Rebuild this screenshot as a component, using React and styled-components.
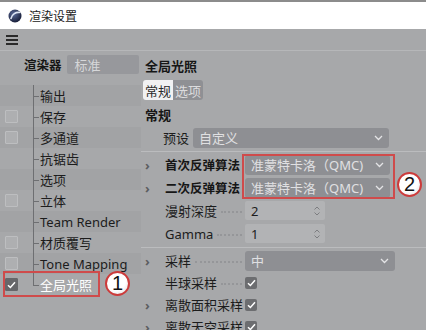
import React from "react";
import styled, { createGlobalStyle } from "styled-components";

const GlobalStyle = createGlobalStyle`
  html, body {
    margin: 0;
    padding: 0;
    background: #ffffff;
    font-family: "Noto Sans", "Noto Sans CJK SC", sans-serif;
  }
`;

// tree items on the left
const treeItems = [
  { label: "输出", box: false },
  { label: "保存", box: true },
  { label: "多通道", box: true },
  { label: "抗锯齿", box: false },
  { label: "选项", box: false },
  { label: "立体", box: true },
  { label: "Team Render", box: false },
  { label: "材质覆写", box: true },
  { label: "Tone Mapping", box: true },
  { label: "全局光照", box: true, checked: true, selected: true },
];

const Logo = () => (
  <svg width="14" height="14" viewBox="0 0 14 14">
    <defs>
      <radialGradient id="lg" cx="0.4" cy="0.35" r="0.7">
        <stop offset="0" stopColor="#5a6a9a" />
        <stop offset="1" stopColor="#141a33" />
      </radialGradient>
    </defs>
    <circle cx="7" cy="7" r="6.5" fill="url(#lg)" />
    <path d="M3 9.5 C4 5 8 3 11.5 3.5" stroke="#dfe6f5" strokeWidth="1.6" fill="none" strokeLinecap="round" />
  </svg>
);

const Chevron = () => (
  <svg width="9" height="6" viewBox="0 0 9 6">
    <polyline points="1,1 4.5,4.5 8,1" fill="none" stroke="#e4e4e6" strokeWidth="1.3" />
  </svg>
);

const Spinner = () => (
  <svg width="8" height="12" viewBox="0 0 8 12">
    <polyline points="1.5,4.5 4,2 6.5,4.5" fill="none" stroke="#7c7d80" strokeWidth="1" />
    <polyline points="1.5,7.5 4,10 6.5,7.5" fill="none" stroke="#7c7d80" strokeWidth="1" />
  </svg>
);

const Tick = () => (
  <svg width="9" height="8" viewBox="0 0 9 8">
    <polyline points="1,4.2 3.4,6.5 8,1.2" fill="none" stroke="#ffffff" strokeWidth="1.5" />
  </svg>
);

const App = () => {
  return (
    <>
      <GlobalStyle />
      <Window>
        <TitleBar>
          <Logo />
          <TitleText>渲染设置</TitleText>
        </TitleBar>
        <MenuBar>
          <Hamburger>
            <span />
            <span />
            <span />
          </Hamburger>
        </MenuBar>
        <Body>
          <Sidebar>
            <RendererRow>
              <Bold>渲染器</Bold>
              <SideSelect>标准</SideSelect>
            </RendererRow>
            <Tree>
              {treeItems.map((item, i) => (
                <TreeRow key={item.label} $striped={i % 2 === 0 && !item.selected}>
                  <BoxCell>
                    {item.box && (
                      <TreeCheck $checked={item.checked}>{item.checked && <Tick />}</TreeCheck>
                    )}
                  </BoxCell>
                  <TreeLabel $last={i === treeItems.length - 1} $selected={item.selected}>
                    {item.label}
                  </TreeLabel>
                  {item.selected && (
                    <>
                      <RedBox $left={3} $top={-3} $width={97} $height={26} />
                      <Badge $left={105} $top={-3}>1</Badge>
                    </>
                  )}
                </TreeRow>
              ))}
            </Tree>
          </Sidebar>

          <Main>
            <Heading>全局光照</Heading>
            <Tabs>
              <Tab $active>常规</Tab>
              <Tab>选项</Tab>
            </Tabs>
            <Heading $gap={5}>常规</Heading>
            <PresetRow>
              <PresetLabel>预设</PresetLabel>
              <Select $width={196}>
                自定义
                <Chevron />
              </Select>
            </PresetRow>

            <Separator />

            <Group $gap={2}>
              <Row>
                <Arrow>›</Arrow>
                <Label>
                  <Bold>首次反弹算法</Bold>
                </Label>
                <Select $width={145}>
                  准蒙特卡洛（QMC)
                  <Chevron />
                </Select>
              </Row>
              <Row>
                <Arrow>›</Arrow>
                <Label>
                  <Bold>二次反弹算法</Bold>
                </Label>
                <Select $width={145}>
                  准蒙特卡洛（QMC)
                  <Chevron />
                </Select>
              </Row>
              <RedBox $left={101} $top={0} $width={153} $height={45} />
              <Badge $left={256} $top={18}>2</Badge>
            </Group>

            <Group $gap={2} $top={2}>
              <Row>
                <Arrow />
                <Label>
                  漫射深度<Dots />
                </Label>
                <NumberField>
                  2
                  <Spinner />
                </NumberField>
              </Row>
              <Row>
                <Arrow />
                <Label>
                  Gamma<Dots />
                </Label>
                <NumberField>
                  1
                  <Spinner />
                </NumberField>
              </Row>
            </Group>

            <Separator />

            <Group $gap={1}>
              <Row>
                <Arrow>›</Arrow>
                <Label>
                  采样<Dots />
                </Label>
                <Select $width={150}>
                  中
                  <Chevron />
                </Select>
              </Row>
              <Row>
                <Arrow />
                <Label>
                  半球采样<Dots />
                </Label>
                <CheckBox>
                  <Tick />
                </CheckBox>
              </Row>
              <Row>
                <Arrow>›</Arrow>
                <Label>离散面积采样</Label>
                <CheckBox>
                  <Tick />
                </CheckBox>
              </Row>
              <Row>
                <Arrow>›</Arrow>
                <Label>离散天空采样</Label>
                <CheckBox>
                  <Tick />
                </CheckBox>
              </Row>
            </Group>
          </Main>
        </Body>
      </Window>
    </>
  );
};

const Window = styled.div`
  width: 426px;
  height: 330px;
  overflow: hidden;
  display: flex;
  flex-direction: column;
  background: #a7a8aa;
  color: #1c1c1c;
  font-size: 13px;
`;
const TitleBar = styled.div`
  height: 27px;
  border-top: 2px solid #8c8c8c;
  background: #ffffff;
  display: flex;
  align-items: center;
  gap: 7px;
  padding-left: 8px;
  flex-shrink: 0;
`;
const TitleText = styled.span`
  font-size: 12px;
  color: #222;
`;
const MenuBar = styled.div`
  height: 21px;
  border-bottom: 1px solid #b6b7b9;
  display: flex;
  align-items: center;
  padding-left: 6px;
  flex-shrink: 0;
`;
const Hamburger = styled.div`
  display: flex;
  flex-direction: column;
  gap: 2px;
  span {
    display: block;
    width: 12px;
    height: 2px;
    background: #2a2a2a;
  }
`;
const Body = styled.div`
  flex: 1;
  display: flex;
  min-height: 0;
`;
const Sidebar = styled.div`
  width: 141px;
  flex-shrink: 0;
  display: flex;
  flex-direction: column;
  & > * {
    flex-shrink: 0;
  }
`;
const RendererRow = styled.div`
  margin-top: 3px;
  height: 20px;
  display: flex;
  align-items: center;
  gap: 5px;
  padding-left: 24px;
`;
const Bold = styled.span`
  font-weight: 700;
  font-size: 12.5px;
  color: #161616;
`;
const SideSelect = styled.div`
  width: 64px;
  height: 19px;
  background: #97989c;
  color: #d6d7d9;
  border-radius: 2px;
  padding-left: 8px;
  display: flex;
  align-items: center;
`;
const Tree = styled.div`
  margin-top: 11px;
  display: flex;
  flex-direction: column;
`;
const TreeRow = styled.div`
  position: relative;
  height: 21px;
  flex-shrink: 0;
  display: flex;
  align-items: stretch;
  background: ${(p) => (p.$striped ? "#a2a3a5" : "transparent")};
`;
const BoxCell = styled.div`
  width: 33px;
  display: flex;
  align-items: center;
  padding-left: 5px;
  box-sizing: border-box;
`;
const TreeCheck = styled.div`
  width: 11px;
  height: 11px;
  border: 1px solid ${(p) => (p.$checked ? "#66676a" : "#bdbec0")};
  background: ${(p) => (p.$checked ? "#66676a" : "#aeafb1")};
  border-radius: 1px;
  display: flex;
  align-items: center;
  justify-content: center;
`;
const TreeLabel = styled.div`
  position: relative;
  flex: 1;
  display: flex;
  align-items: center;
  padding-left: 7px;
  color: ${(p) => (p.$selected ? "#ffffff" : "#1c1c1c")};
  white-space: nowrap;
  &::before {
    content: "";
    position: absolute;
    left: 0;
    top: 0;
    height: ${(p) => (p.$last ? "50%" : "100%")};
    border-left: 1px solid #6e6f72;
  }
  &::after {
    content: "";
    position: absolute;
    left: 0;
    top: 50%;
    width: 6px;
    border-top: 1px solid #6e6f72;
  }
`;
const RedBox = styled.div`
  position: absolute;
  left: ${(p) => p.$left}px;
  top: ${(p) => p.$top}px;
  width: ${(p) => p.$width}px;
  height: ${(p) => p.$height}px;
  border: 2px solid #cf4b4b;
  box-sizing: border-box;
  pointer-events: none;
`;
const Badge = styled.div`
  position: absolute;
  left: ${(p) => p.$left}px;
  top: ${(p) => p.$top}px;
  width: 25px;
  height: 25px;
  box-sizing: border-box;
  border: 2px solid #cc3b3b;
  border-radius: 50%;
  background: radial-gradient(circle at 40% 35%, #ffffff 55%, #d9d9d9 100%);
  color: #111;
  font-family: "Liberation Sans", sans-serif;
  font-size: 20px;
  line-height: 21px;
  text-align: center;
`;
const Main = styled.div`
  flex: 1;
  display: flex;
  flex-direction: column;
  padding-top: 5px;
  position: relative;
  & > * {
    flex-shrink: 0;
  }
`;
const Heading = styled.div`
  margin-top: ${(p) => p.$gap || 0}px;
  padding-left: 4px;
  height: 20px;
  line-height: 20px;
  font-weight: 700;
  color: #161616;
`;
const Tabs = styled.div`
  margin-top: 4px;
  margin-left: 2px;
  align-self: flex-start;
  display: flex;
  height: 20px;
  border-radius: 3px;
  overflow: hidden;
`;
const Tab = styled.div`
  padding: 0 2px;
  display: flex;
  align-items: center;
  background: ${(p) => (p.$active ? "#f1f1f2" : "#8f9094")};
  color: ${(p) => (p.$active ? "#2a2a2a" : "#dcdcde")};
`;
const PresetRow = styled.div`
  margin-top: 2px;
  height: 21px;
  display: flex;
  align-items: center;
  padding-left: 22px;
  gap: 4px;
`;
const PresetLabel = styled.span`
  width: 26px;
`;
const Select = styled.div`
  width: ${(p) => p.$width}px;
  height: 20px;
  box-sizing: border-box;
  background: #8e8f93;
  color: #e0e0e2;
  border-radius: 3px;
  padding: 0 6px 0 6px;
  display: flex;
  align-items: center;
  justify-content: space-between;
  white-space: nowrap;
`;
const Separator = styled.div`
  margin-top: 3px;
  height: 0;
  border-top: 1px solid #bbbcbe;
`;
const Group = styled.div`
  position: relative;
  margin-top: ${(p) => (p.$top === undefined ? 2 : p.$top)}px;
  display: flex;
  flex-direction: column;
  gap: ${(p) => p.$gap}px;
  & > * {
    flex-shrink: 0;
  }
`;
const Row = styled.div`
  height: 21px;
  display: flex;
  align-items: center;
`;
const Arrow = styled.span`
  width: 24px;
  padding-left: 4px;
  box-sizing: border-box;
  color: #5c5d60;
  font-size: 13px;
  font-weight: 700;
`;
const Label = styled.div`
  width: 80px;
  display: flex;
  align-items: baseline;
  white-space: nowrap;
  color: #1c1c1c;
`;
const Dots = styled.span`
  flex: 1;
  margin: 0 3px 0 4px;
  border-bottom: 2px dotted #959699;
  transform: translateY(-3px);
`;
const NumberField = styled.div`
  width: 80px;
  height: 19px;
  box-sizing: border-box;
  background: #b2b3b5;
  border-radius: 2px;
  padding: 0 4px 0 6px;
  display: flex;
  align-items: center;
  justify-content: space-between;
  color: #1c1c1c;
`;
const CheckBox = styled.div`
  width: 12px;
  height: 12px;
  background: #6c6d70;
  border-radius: 2px;
  display: flex;
  align-items: center;
  justify-content: center;
`;

export default App;
